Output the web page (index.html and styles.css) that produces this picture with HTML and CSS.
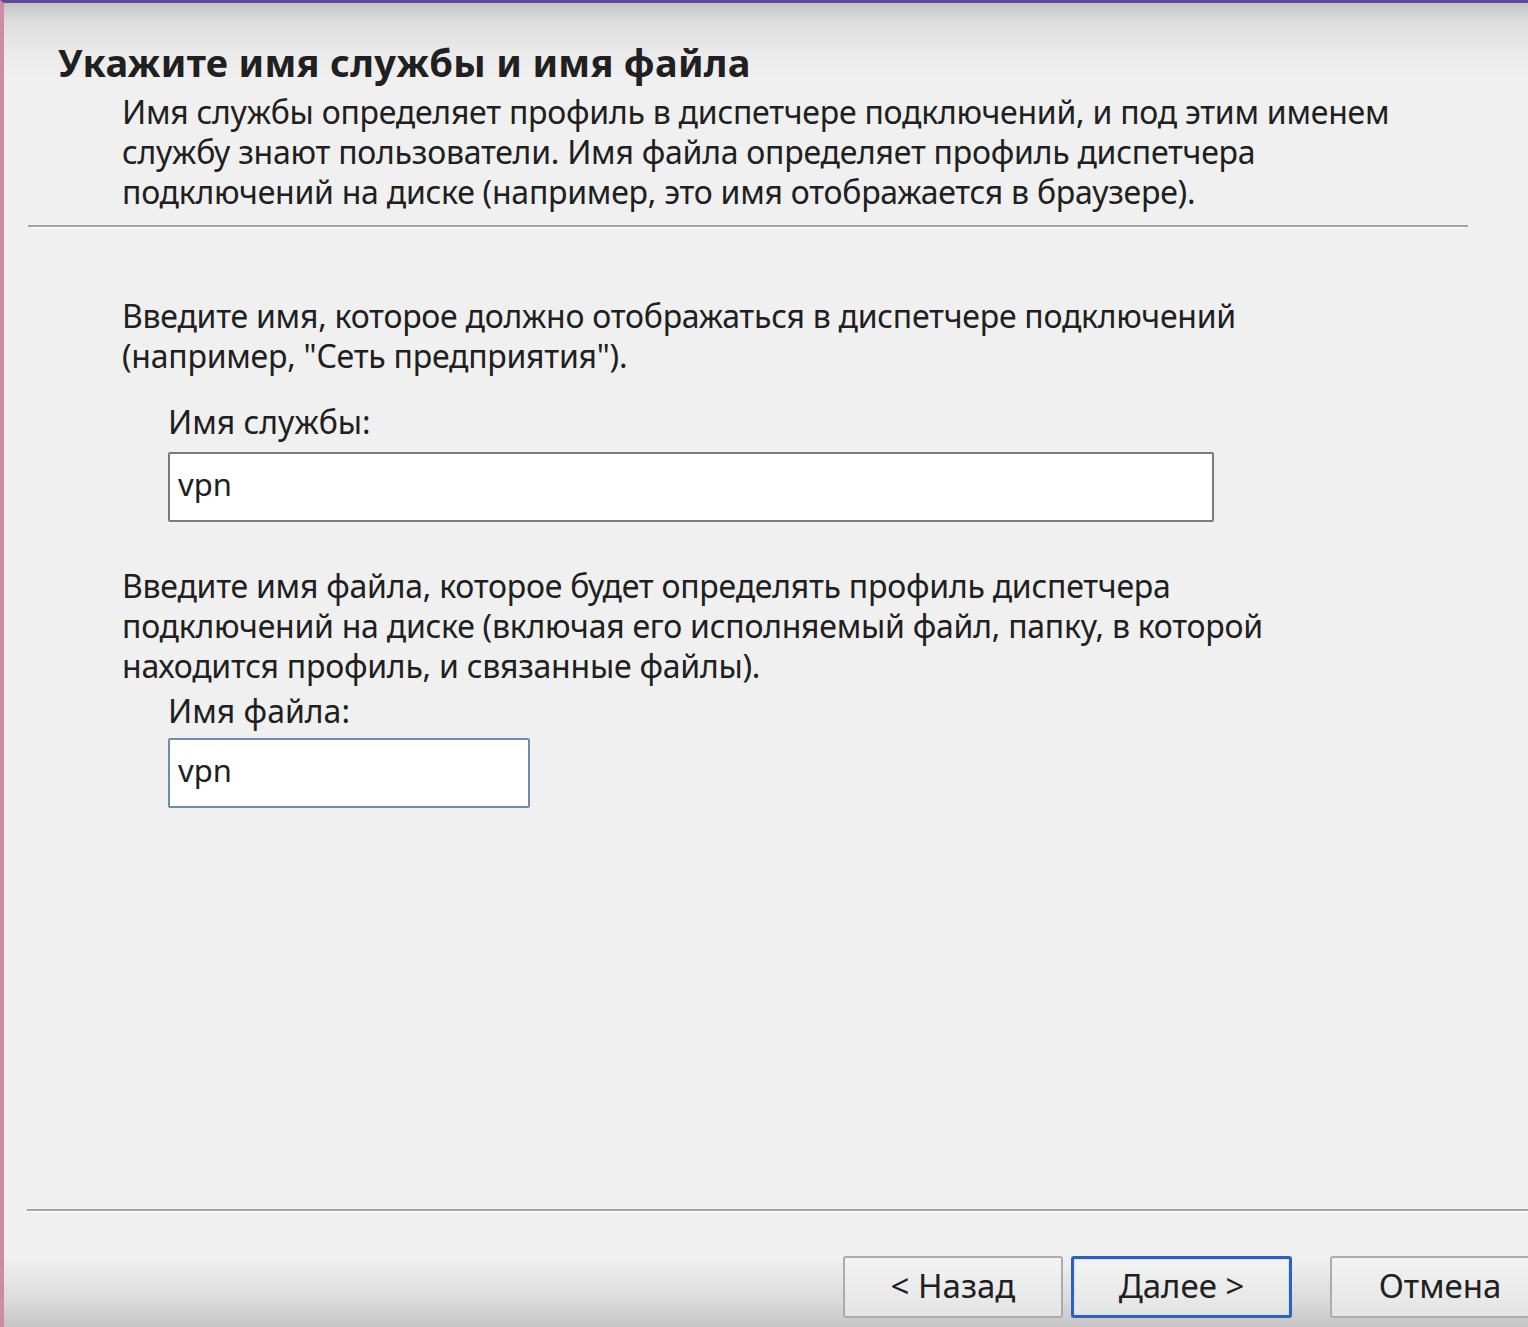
FILE: index.html
```html
<!DOCTYPE html>
<html lang="ru">
<head>
<meta charset="utf-8">
<title>Мастер</title>
<link rel="stylesheet" href="styles.css">
</head>
<body>
<div class="window">
  <header class="head">
    <h1 class="title">Укажите имя службы и имя файла</h1>
    <p class="desc">Имя службы определяет профиль в диспетчере подключений, и под этим именем<br>службу знают пользователи. Имя файла определяет профиль диспетчера<br>подключений на диске (например, это имя отображается в браузере).</p>
  </header>
  <div class="sep sep-top"></div>
  <main class="main">
    <p class="para para-first">Введите имя, которое должно отображаться в диспетчере подключений<br>(например, "Сеть предприятия").</p>
    <label class="label label-first" for="svc">Имя службы:</label>
    <div class="field field-wide"><input id="svc" class="input" type="text" value="vpn"></div>
    <p class="para para-second">Введите имя файла, которое будет определять профиль диспетчера<br>подключений на диске (включая его исполняемый файл, папку, в которой<br>находится профиль, и связанные файлы).</p>
    <label class="label label-second" for="file">Имя файла:</label>
    <div class="field field-short"><input id="file" class="input" type="text" value="vpn"></div>
  </main>
  <footer class="foot">
    <div class="sep sep-bottom"></div>
    <div class="buttons">
      <button class="btn" type="button">&lt; Назад</button>
      <button class="btn btn-default" type="button">Далее &gt;</button>
      <button class="btn btn-cancel" type="button">Отмена</button>
    </div>
  </footer>
</div>
</body>
</html>
```

FILE: styles.css
```css
html, body {
  margin: 0;
  padding: 0;
  width: 1528px;
  height: 1327px;
  overflow: hidden;
  background: #f0f0f0;
}

.window {
  box-sizing: border-box;
  width: 1528px;
  height: 1327px;
  border-top: 3px solid #5d4a98;
  border-left: 4px solid #cf8aa4;
  display: flex;
  flex-direction: column;
  overflow: hidden;
  font-family: "Noto Sans", "DejaVu Sans", sans-serif;
  color: #202020;
  background: linear-gradient(to bottom, #c4c4c4 0px, #dedede 20px, #eaeaea 50px, #f0f0f0 75px, #f0f0f0 1255px, #dcdcdc 1295px, #c6c6c6 1324px);
}

.head {
  padding: 37px 0 0 54px;
}

.title {
  margin: 0;
  font-size: 38px;
  line-height: 44px;
  font-weight: bold;
  letter-spacing: 0.3px;
}

.desc {
  margin: 8px 0 0 64px;
  font-size: 32px;
  line-height: 40px;
  letter-spacing: -0.25px;
}

.sep {
  height: 2px;
  background: #a3a3a3;
  border-bottom: 1px solid #ffffff;
}

.sep-top {
  margin: 13px 0 0 24px;
  width: 1440px;
}

.main {
  flex: 1;
  padding-left: 118px;
}

.para {
  margin: 0;
  font-size: 32px;
  line-height: 40px;
  letter-spacing: -0.25px;
}

.para-first {
  margin-top: 68px;
}

.para-second {
  margin-top: 44px;
}

.label {
  display: block;
  margin-left: 46px;
  font-size: 32px;
  line-height: 40px;
}

.label-first {
  margin-top: 26px;
}

.label-second {
  margin-top: 5px;
}

.field {
  margin-left: 46px;
  margin-top: 10px;
}

.field-short {
  margin-top: 7px;
}

.input {
  box-sizing: border-box;
  display: block;
  height: 70px;
  margin: 0;
  padding: 0 0 6px 8px;
  border: 2px solid #7b7b7b;
  border-radius: 2px;
  background: #ffffff;
  font-family: "Noto Sans", "DejaVu Sans", sans-serif;
  font-size: 31px;
  color: #202020;
  outline: none;
}

.field-wide .input {
  width: 1046px;
}

.field-short .input {
  width: 362px;
  border-color: #6f8cab;
}

.foot {
  display: flex;
  flex-direction: column;
}

.sep-bottom {
  margin-left: 23px;
}

.buttons {
  display: flex;
  justify-content: flex-end;
  gap: 8px;
  margin: 44px -22px 9px 0;
}

.btn {
  box-sizing: border-box;
  width: 220px;
  height: 62px;
  margin: 0;
  padding: 0 0 4px 0;
  border: 2px solid #acacac;
  border-radius: 3px;
  background: linear-gradient(to bottom, #f3f3f3, #e4e4e4);
  font-family: "Noto Sans", "DejaVu Sans", sans-serif;
  font-size: 33px;
  color: #202020;
}

.btn-default {
  width: 221px;
  border: 3px solid #2f5fbf;
  box-shadow: inset 0 0 0 1px #cfe3f5;
}

.btn-cancel {
  margin-left: 30px;
}
```
